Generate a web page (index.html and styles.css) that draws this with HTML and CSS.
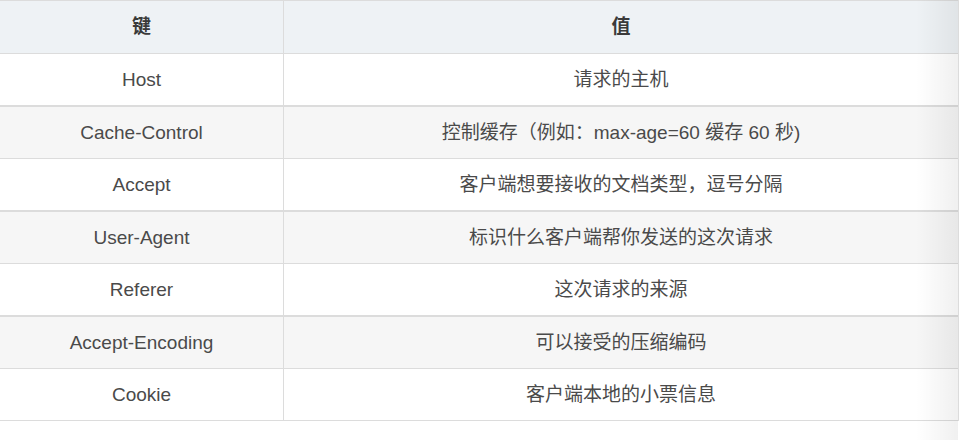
FILE: index.html
```html
<!DOCTYPE html>
<html lang="zh-CN">
<head>
<meta charset="utf-8">
<title>HTTP 请求头</title>
<link rel="stylesheet" href="styles.css">
</head>
<body>
<div class="wrap">
  <table class="kv">
    <thead>
      <tr><th class="k">键</th><th class="v">值</th></tr>
    </thead>
    <tbody>
      <tr><td>Host</td><td>请求的主机</td></tr>
      <tr><td>Cache-Control</td><td>控制缓存（例如：max-age=60 缓存 60 秒)</td></tr>
      <tr><td>Accept</td><td>客户端想要接收的文档类型，逗号分隔</td></tr>
      <tr><td>User-Agent</td><td>标识什么客户端帮你发送的这次请求</td></tr>
      <tr><td>Referer</td><td>这次请求的来源</td></tr>
      <tr><td>Accept-Encoding</td><td>可以接受的压缩编码</td></tr>
      <tr><td>Cookie</td><td>客户端本地的小票信息</td></tr>
    </tbody>
  </table>
  <div class="shade"></div>
</div>
</body>
</html>
```

FILE: styles.css
```css
html, body {
  margin: 0;
  padding: 0;
  background: #fff;
}
.wrap {
  position: relative;
  width: 959px;
  height: 440px;
  font-family: "Liberation Sans", Arial, "Noto Sans CJK SC", sans-serif;
  font-size: 19px;
  color: #4a4a4a;
}
.kv {
  width: 959px;
  border-collapse: separate;
  border-spacing: 0;
  table-layout: fixed;
}
.kv th, .kv td {
  padding: 0;
  text-align: center;
  vertical-align: middle;
  border-bottom: 1px solid #dcdcdc;
  border-right: 1px solid #dcdcdc;
  height: 51px;
  line-height: 22px;
}
.kv th.k, .kv td:first-child {
  width: 283px;
}
.kv thead th {
  background: #eef2f5;
  border-top: 1px solid #dcdcdc;
  height: 52px;
  font-weight: bold;
  color: #3a3a3a;
}
.kv tbody tr:nth-child(odd) td {
  border-bottom-width: 2px;
}
.kv tbody tr:last-child td {
  border-bottom-width: 1px;
}
.kv tbody tr:nth-child(even) td {
  background: #f6f6f6;
}
.shade {
  position: absolute;
  top: 0;
  right: 1px;
  width: 42px;
  height: 440px;
  background: linear-gradient(to right, rgba(0,0,0,0), rgba(0,0,0,0.06));
  pointer-events: none;
}
```
